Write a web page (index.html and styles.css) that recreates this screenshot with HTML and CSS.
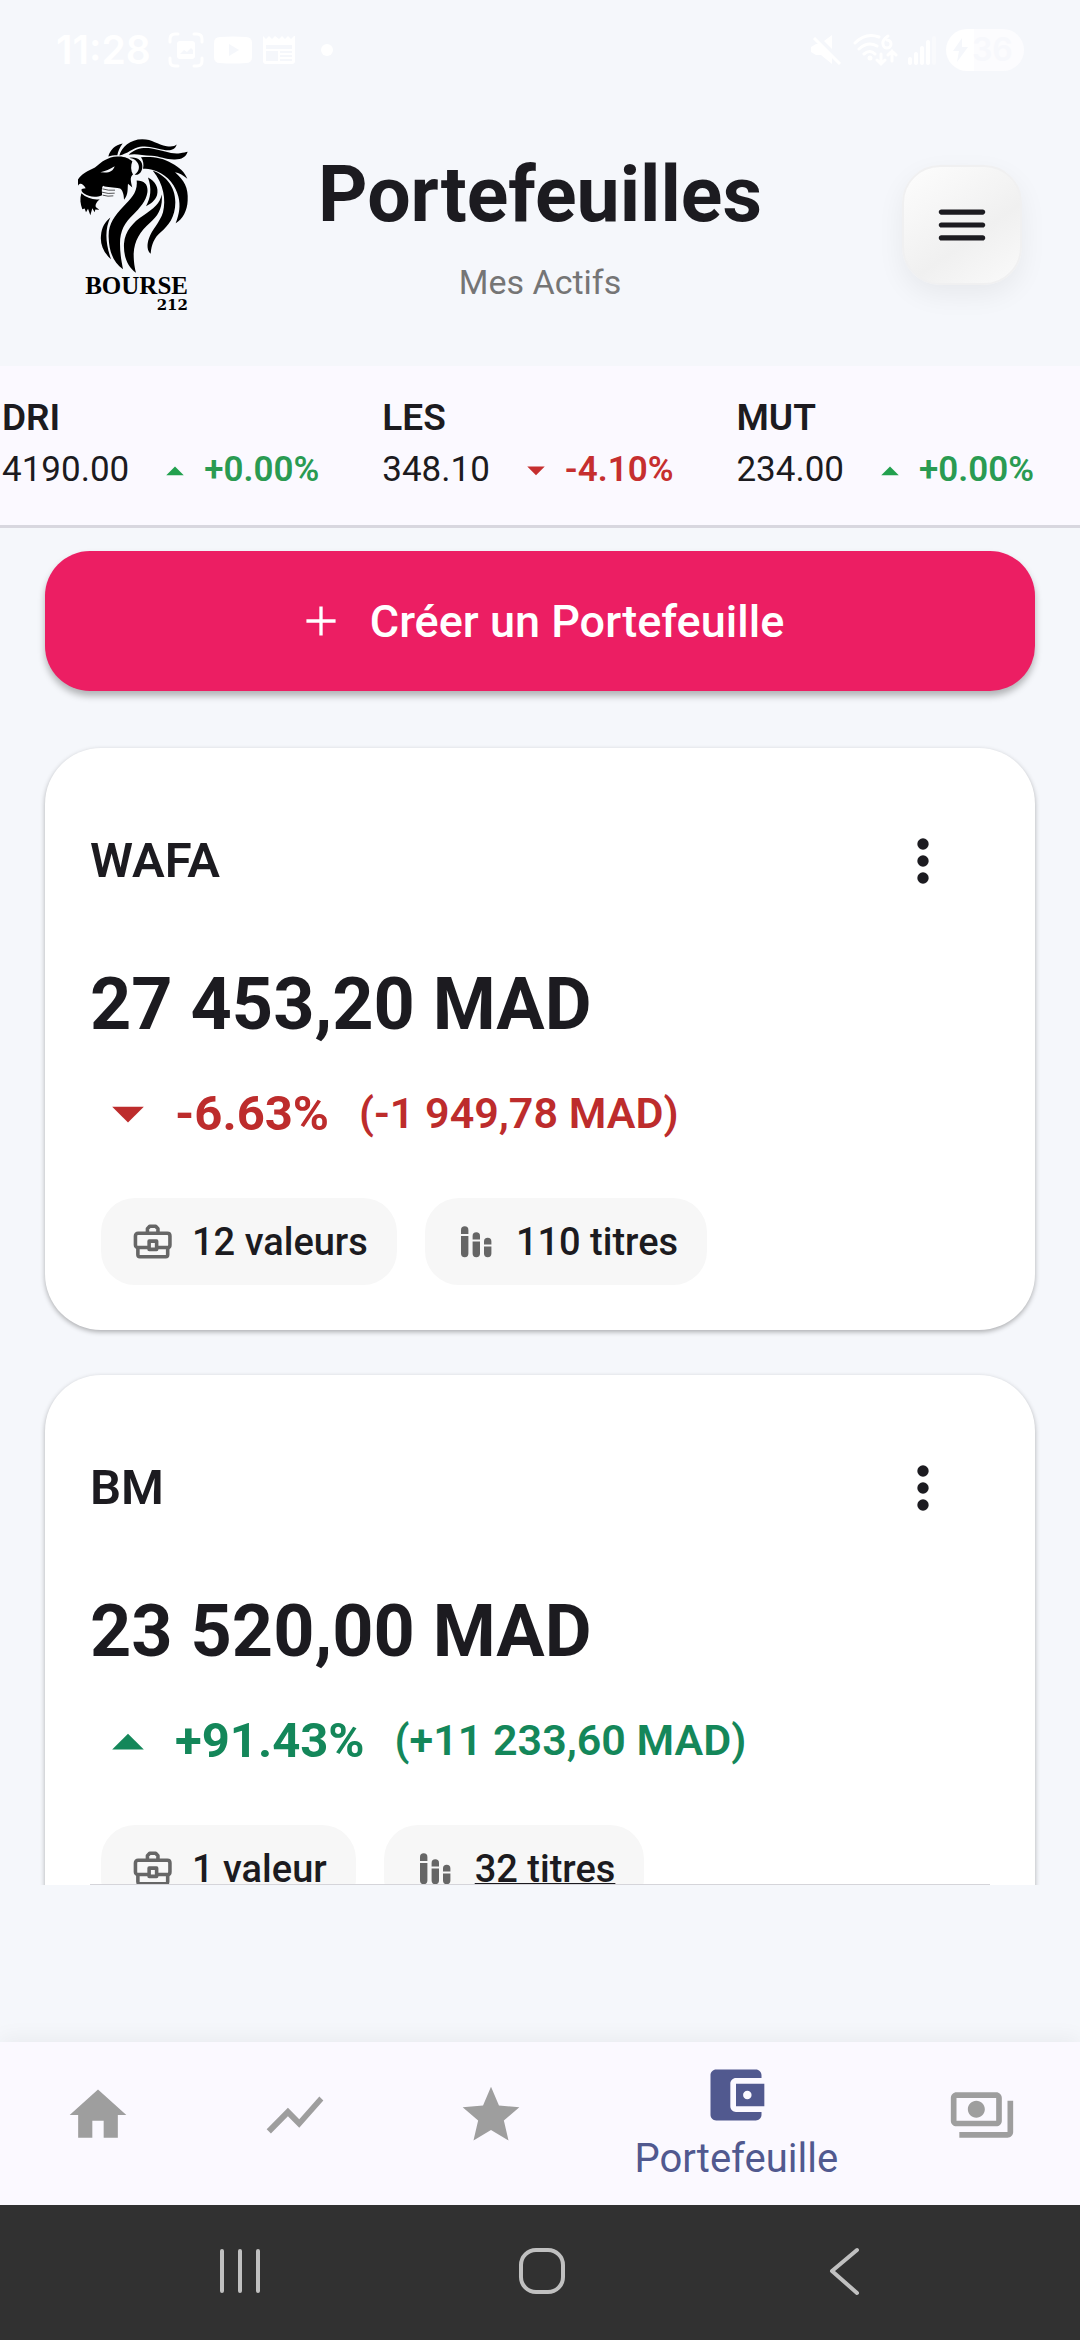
FILE: index.html
```html
<!DOCTYPE html>
<html lang="fr">
<head>
  <meta charset="UTF-8" />
  <meta name="viewport" content="width=device-width, initial-scale=1" />
  <title>Bourse 212 - Portefeuilles</title>
  <link rel="stylesheet" href="styles.css">
</head>
<body>
  <!-- icônes réutilisées -->
  <svg class="sprite" aria-hidden="true">
    <symbol id="up" viewBox="0 0 24 24"><path d="M7 15l5-5 5 5z"/></symbol>
    <symbol id="down" viewBox="0 0 24 24"><path d="M7 10l5 5 5-5z"/></symbol>
    <symbol id="dots" viewBox="0 0 24 24"><circle cx="12" cy="6" r="2"/><circle cx="12" cy="12" r="2"/><circle cx="12" cy="18" r="2"/></symbol>
    <symbol id="case" viewBox="0 0 24 24">
      <g fill="none" stroke="currentColor" stroke-width="1.9" stroke-linejoin="round">
        <path d="M9.3 7.5V5.2L10.5 3.9h3.2l1.2 1.3v2.3"/>
        <path d="M9.8 15.2H4.3c-.8 0-1.4-.6-1.4-1.4V9c0-.8.6-1.4 1.4-1.4h15.6c.8 0 1.4.6 1.4 1.4v4.8c0 .8-.6 1.4-1.4 1.4h-5.3"/>
        <path d="M4.2 15.2v3.9c0 .6.4 1 1 1h13.9c.6 0 1-.4 1-1v-3.9"/>
        <path d="M10.2 11.8h4v4.4h-4z"/>
      </g>
    </symbol>
    <symbol id="bars" viewBox="0 0 45 45">
      <path d="M7 15v-4a3.7 3.7 0 0 1 7.4 0v4zM7 17h7.4v17.500a3.700 3.700 0 0 1-7.400 0zM18.600 20.500v-3.500a3.700 3.700 0 0 1 7.400 0v3.500zM18.600 22.500h7.400v12a3.700 3.700 0 0 1-7.400 0zM30 25.500v-3a3.700 3.700 0 0 1 7.400 0v3zM30 27.500h7.400v7a3.700 3.700 0 0 1-7.400 0z"/>
    </symbol>
  </svg>

  <div class="status">
    <div class="status-left">
      <span class="clock">11:28</span>
      <svg width="36" height="36" viewBox="0 0 36 36"><g fill="none" stroke="#fff" stroke-width="3" stroke-linecap="round"><path d="M2 10V7q0-5 5-5h3M26 2h3q5 0 5 5v3M34 26v3q0 5-5 5h-3M10 34H7q-5 0-5-5v-3"/></g><path fill="#fff" fill-rule="evenodd" d="M12 9h12q3 0 3 3v12q0 3-3 3H12q-3 0-3-3V12q0-3 3-3zM12 22h13v-4l-2-2-4 4-3-2z"/></svg>
      <svg width="40" height="36" viewBox="0 0 40 36"><path fill="#fff" fill-rule="evenodd" d="M7 5q13-1 26 0 6 0 6 6v14q0 6-6 6-13 1-26 0-6 0-6-6V11q0-6 6-6zM16 12v12l10-6z"/></svg>
      <svg width="34" height="36" viewBox="0 0 34 36"><path fill="#fff" fill-rule="evenodd" d="M1 4l3 3 3-3 3 3 3-3 4 3 3-3 3 3 3-3 3 3 3-3h1v25q0 3-3 3H4q-3 0-3-3zM4 13v4h26v-4zM4 19v10h12V19zM18 19v2h12v-2zM18 23v2h12v-2zM18 27v2h12v-2z"/></svg>
      <svg class="dot" width="12" height="12" viewBox="0 0 12 12"><circle cx="6" cy="6" r="6" fill="#fff"/></svg>
    </div>
    <div class="status-right">
      <svg width="32" height="32" viewBox="0 0 32 32"><path fill="#fff" d="M1 13l5-3h3l13 13v7L11 21H6l-5-3zM14 7l8-6v14z"/><path stroke="#fff" stroke-width="3" d="M4 4l26 26"/></svg>
      <svg width="46" height="34" viewBox="0 0 46 34"><g fill="none" stroke="#fff" stroke-width="3" stroke-linecap="round"><path d="M3 10Q14-1 27 4M7 16q9-8 18-3M12 21q6-5 11 0"/><path d="M36 3q-6 4-5 8a4 4 0 1 0 4-4M29 21v10M25 27l4 4 4-4M40 28V18M36 22l4-4 4 4"/></g><circle cx="18" cy="25" r="2.500" fill="#fff"/></svg>
      <svg width="28" height="32" viewBox="0 0 28 32"><g stroke="#fff" stroke-width="4" stroke-linecap="round"><path d="M2 25v4M8 20v9M14 14v15M20 8v21"/><path opacity=".4" d="M26 4v25"/></g></svg>
      <span class="battery"><svg width="18" height="24" viewBox="0 0 18 24"><path fill="#f5f7fb" d="M10 0L1 13h6l-2 11L16 9h-6z"/></svg>36</span>
    </div>
  </div>

  <header class="header">
    <div class="logo">
      <svg class="lion" viewBox="45 50 345 410" aria-hidden="true">
        <path d="M145 108C150 88 165 74 188 69C180 80 174 92 172 104C162 104 152 105 145 108z"/>
        <path d="M178 105C185 80 210 56 247 56C277 56 292 72 320 77C335 79 345 77 350 72C346 87 332 91 318 89C290 84 265 74 240 79C217 84 203 100 178 105z"/>
        <path d="M206 103C225 84 250 80 275 84C310 90 335 102 360 98C370 97 378 95 383 94C378 110 365 117 345 117C320 118 300 108 275 106C245 104 225 98 206 103z"/>
        <path d="M243 110C275 107 310 112 335 128C358 140 375 155 382 175C368 163 357 157 345 155C372 178 386 202 383 240C382 270 368 297 347 308C358 280 362 255 355 228C348 198 325 165 290 152C275 146 262 143 249 145C252 132 250 120 243 110z"/>
        <path d="M278 150C315 165 346 195 346 245C346 290 325 315 302 335C284 350 274 370 272 400C261 390 260 372 267 353C275 328 300 305 309 275C318 240 312 190 278 150z"/>
        <path d="M264 171C286 182 297 202 291 224C285 240 272 250 258 257C272 232 276 205 264 171z"/>
        <path d="M230 180C256 180 265 195 262 217C258 242 240 262 220 282C195 305 180 330 180 370C180 400 185 425 189 446C162 428 147 395 146 350C144 310 165 285 188 260C213 235 234 215 230 180z"/>
        <path d="M305 222C309 262 295 285 270 307C241 332 223 360 221 400C221 425 224 440 228 457C204 440 190 410 192 370C195 330 220 305 250 285C280 265 301 248 305 222z"/>
        <path d="M151 291C135 325 135 365 153 416C130 396 120 370 123 345C125 320 135 305 151 291z"/>
        <path d="M54 177C62 162 85 150 105 141C125 124 143 109 172 108C195 107 206 114 217 122C212 135 212 150 219 162C209 170 212 182 217 201L204 190C202 206 206 222 192 238C192 220 186 206 180 204C160 200 142 202 129 196C123 205 127 214 126 224C105 233 84 227 72 219C64 213 62 206 68 205L77 203C69 190 60 185 54 196z"/>
        <path d="M208 112C230 107 249 120 247 140C246 155 235 166 224 162C236 155 240 140 234 129C228 118 220 115 208 112z"/>
        <path d="M64 218C80 232 100 239 119 236C108 245 105 255 108 260L118 268L106 267L104 275L97 263L91 284L84 265L78 275L74 264L67 266C61 250 59 235 64 218z"/>
        <path class="eye" d="M121 155C136 151 150 146 164 137C160 150 150 156 135 156z"/>
        <path class="whisker" d="M127 205q18 6 38 4M126 215q18 6 38 3M128 224q16 5 32 2"/>
      </svg>
      <span class="logo-name">BOURSE</span>
      <span class="logo-num">212</span>
    </div>
    <div class="titles">
      <h1>Portefeuilles</h1>
      <p>Mes Actifs</p>
    </div>
    <button class="menu-btn" aria-label="Menu">
      <svg width="62" height="62" viewBox="0 0 24 24"><path d="M4 18h16c.55 0 1-.45 1-1s-.45-1-1-1H4c-.55 0-1 .45-1 1s.45 1 1 1zm0-5h16c.55 0 1-.45 1-1s-.45-1-1-1H4c-.55 0-1 .45-1 1s.45 1 1 1zM3 7c0 .55.45 1 1 1h16c.55 0 1-.45 1-1s-.45-1-1-1H4c-.55 0-1 .45-1 1z"/></svg>
    </button>
  </header>

  <section class="ticker">
    <div class="quote">
      <b>DRI</b>
      <div class="quote-row"><span>4190.00</span><svg><use href="#up"/></svg><span class="pct up">+0.00%</span></div>
    </div>
    <div class="quote">
      <b>LES</b>
      <div class="quote-row"><span>348.10</span><svg class="down"><use href="#down"/></svg><span class="pct down">-4.10%</span></div>
    </div>
    <div class="quote">
      <b>MUT</b>
      <div class="quote-row"><span>234.00</span><svg><use href="#up"/></svg><span class="pct up">+0.00%</span></div>
    </div>
  </section>

  <main class="list">
    <button class="create-btn">
      <svg width="50" height="50" viewBox="0 0 24 24"><path d="M19 12.800h-6.200V19h-1.600v-6.200H5v-1.600h6.200V5h1.600v6.200H19z"/></svg>
      Créer un Portefeuille
    </button>

    <article class="card">
      <div class="card-head">
        <h2>WAFA</h2>
        <button class="more" aria-label="Options WAFA"><svg><use href="#dots"/></svg></button>
      </div>
      <div class="amount">27 453,20 MAD</div>
      <div class="change loss">
        <svg><use href="#down"/></svg>
        <strong>-6.63%</strong>
        <span>(-1 949,78 MAD)</span>
      </div>
      <div class="chips">
        <div class="chip"><svg><use href="#case"/></svg>12 valeurs</div>
        <div class="chip"><svg><use href="#bars"/></svg>110 titres</div>
      </div>
    </article>

    <article class="card">
      <div class="card-head">
        <h2>BM</h2>
        <button class="more" aria-label="Options BM"><svg><use href="#dots"/></svg></button>
      </div>
      <div class="amount">23 520,00 MAD</div>
      <div class="change gain">
        <svg><use href="#up"/></svg>
        <strong>+91.43%</strong>
        <span>(+11 233,60 MAD)</span>
      </div>
      <div class="chips">
        <div class="chip"><svg><use href="#case"/></svg>1 valeur</div>
        <div class="chip"><svg><use href="#bars"/></svg><span class="marked">32 titres</span></div>
      </div>
    </article>
  </main>

  <nav class="tabs">
    <a href="#" aria-label="Accueil"><svg viewBox="0 0 24 24"><path d="M10 20v-6h4v6h5v-8h3L12 3 2 12h3v8z"/></svg></a>
    <a href="#" aria-label="Marché"><svg viewBox="0 0 24 24"><path d="M3.500 18.490l6-6.010 4 4L22 6.920l-1.410-1.410-7.090 7.970-4-4L2 16.990z"/></svg></a>
    <a href="#" aria-label="Favoris"><svg viewBox="0 0 24 24"><path d="M12 17.270L18.180 21l-1.640-7.030L22 9.240l-7.190-.61L12 2 9.190 8.630 2 9.240l5.460 4.730L5.820 21z"/></svg></a>
    <a href="#" class="active"><svg viewBox="0 0 24 24"><path d="M21 18v1c0 1.100-.9 2-2 2H5c-1.110 0-2-.9-2-2V5c0-1.100.89-2 2-2h14c1.100 0 2 .9 2 2v1h-9c-1.110 0-2 .9-2 2v8c0 1.100.89 2 2 2h9zm-9-2h10V8H12v8zm4-2.500c-.83 0-1.500-.67-1.500-1.500s.67-1.500 1.500-1.500 1.500.67 1.500 1.500-.67 1.500-1.500 1.500z"/></svg>Portefeuille</a>
    <a href="#" aria-label="Dividendes"><svg viewBox="0 0 24 24"><path d="M19 14V6c0-1.100-.9-2-2-2H3c-1.100 0-2 .9-2 2v8c0 1.100.9 2 2 2h14c1.100 0 2-.9 2-2zm-2 0H3V6h14v8zm-7-7c-1.660 0-3 1.340-3 3s1.340 3 3 3 3-1.340 3-3-1.340-3-3-3zm13 0v11c0 1.100-.9 2-2 2H4v-2h17V7h2z"/></svg></a>
  </nav>

  <div class="sysnav">
    <button aria-label="Applications récentes"><svg width="50" height="50" viewBox="0 0 50 50"><path d="M7 5v40M25 5v40M43 5v40"/></svg></button>
    <button aria-label="Écran d'accueil"><svg width="50" height="50" viewBox="0 0 50 50"><rect x="4" y="4" width="42" height="42" rx="15"/></svg></button>
    <button aria-label="Retour"><svg width="50" height="50" viewBox="0 0 50 50"><path d="M38 4L13 25l25 22"/></svg></button>
  </div>
</body>
</html>
```
FILE: styles.css
```css
* {
  box-sizing: border-box;
}
body {
  margin: 0;
  height: 100vh;
  display: flex;
  flex-direction: column;
  overflow: hidden;
  background-color: #f5f7fb;
  color: #1c1b20;
  font-family: Roboto, sans-serif;
}
h1, h2, p {
  margin: 0;
}
button {
  border: none;
  padding: 0;
  background: none;
  color: inherit;
  font-family: inherit;
  cursor: pointer;
}
svg {
  display: block;
  flex: none;
  fill: currentColor;
}
.sprite {
  position: absolute;
  width: 0;
  height: 0;
}

/* barre d'état */
.status {
  height: 100px;
  flex: none;
  display: flex;
  align-items: center;
  justify-content: space-between;
  padding: 0 56px;
  color: #fff;
}
.status-left,
.status-right {
  display: flex;
  align-items: center;
  gap: 9px;
}
.clock {
  font: 600 39px/44px Inter, sans-serif;
  margin-right: 8px;
}
.dot {
  margin-left: 16px;
}
.status-right {
  gap: 10px;
}
.battery {
  display: flex;
  align-items: center;
  gap: 2px;
  width: 78px;
  height: 42px;
  padding-left: 6px;
  border-radius: 21px;
  background: linear-gradient(90deg, #fff 28px, #fcfcfe 28px);
  color: #f7f8fc;
  font: 600 32px/42px Inter, sans-serif;
}

/* en-tête */
.header {
  flex: none;
  height: 266px;
  display: grid;
  grid-template-columns: 1fr auto 1fr;
  align-items: center;
  padding: 0 58px 17px;
}
.logo {
  display: flex;
  flex-direction: column;
  align-items: flex-end;
  width: 115px;
  margin-left: 17px;
  color: #000;
  font-family: "DejaVu Serif", serif;
  font-weight: bold;
}
.lion {
  width: 115px;
  height: 137px;
}
.eye {
  fill: #f5f7fb;
}
.whisker {
  fill: none;
  stroke: #000;
  stroke-width: 2;
}
.logo-name {
  padding-right: 2px;
  font-family: "Liberation Serif", serif;
  font-size: 25px;
  line-height: 24px;
}
.logo-num {
  padding-right: 2px;
  font-size: 15px;
  line-height: 14px;
}
.titles {
  text-align: center;
}
h1 {
  font-size: 77px;
  font-weight: 700;
  line-height: 94px;
}
.titles p {
  margin-top: 20px;
  font-size: 34px;
  line-height: 40px;
  color: #757575;
}
.menu-btn {
  justify-self: end;
  width: 120px;
  height: 120px;
  display: flex;
  align-items: center;
  justify-content: center;
  border: 2px solid #f0f0f1;
  border-radius: 38px;
  background: linear-gradient(145deg, #fdfdfd, #f0f0f0 60%, #fafafa);
  box-shadow: 0 10px 28px rgba(0, 0, 0, 0.06);
}

/* bandeau des cours */
.ticker {
  flex: none;
  display: flex;
  gap: 63px;
  height: 162px;
  padding: 29px 0 0 2px;
  border-bottom: 3px solid #d8d7df;
  background-color: #fbf9ff;
  white-space: nowrap;
}
.quote b {
  display: block;
  font-size: 37px;
  font-weight: 600;
  line-height: 46px;
}
.quote-row {
  display: flex;
  align-items: center;
  font-size: 35px;
  line-height: 58px;
}
.quote-row svg {
  width: 42px;
  height: 42px;
  margin: 0 8px 0 25px;
  color: #22a04e;
}
.pct {
  font-weight: 600;
}
.up {
  color: #2a9b52;
}
.pct.down,
.quote-row svg.down {
  color: #c62f2f;
}

/* liste */
.list {
  position: relative;
  flex: 1;
  min-height: 0;
  overflow: hidden;
  padding: 23px 45px 0;
  margin-bottom: 157px;
}
.list::after {
  content: "";
  position: absolute;
  left: 90px;
  right: 90px;
  bottom: 0;
  height: 1px;
  background-color: #d5d5da;
}
.create-btn {
  width: 100%;
  height: 140px;
  display: flex;
  align-items: center;
  justify-content: center;
  gap: 24px;
  border-radius: 45px;
  background-color: #ec1e63;
  color: #fff;
  font-size: 45px;
  font-weight: 500;
  box-shadow: 0 5px 7px rgba(0, 0, 0, 0.28);
}
.card {
  margin-top: 45px;
  height: 582px;
  padding: 45px;
  border-radius: 56px;
  background-color: #fff;
  box-shadow: 0 2px 5px rgba(0, 0, 0, 0.3);
}
.create-btn + .card {
  margin-top: 57px;
}
.card-head {
  display: flex;
  align-items: center;
  justify-content: space-between;
}
h2 {
  font-size: 49px;
  font-weight: 600;
}
.more {
  width: 135px;
  height: 135px;
  display: flex;
  align-items: center;
  justify-content: center;
}
.more svg {
  width: 68px;
  height: 68px;
}
.amount {
  margin-top: 33px;
  font-size: 72px;
  font-weight: 700;
  line-height: 88px;
}
.change {
  display: flex;
  align-items: center;
  height: 76px;
  margin-top: 26px;
  white-space: nowrap;
}
.change svg {
  width: 76px;
  height: 76px;
}
.change strong {
  margin: 0 30px 0 9px;
  font-size: 49px;
}
.change span {
  font-size: 43px;
  font-weight: 600;
}
.loss {
  color: #bd2c2c;
}
.gain {
  color: #14875a;
}
.chips {
  display: flex;
  gap: 28px;
  margin: 47px 0 0 11px;
}
.chip {
  display: flex;
  align-items: center;
  gap: 17px;
  height: 87px;
  padding: 0 29px;
  border-radius: 34px;
  background-color: #f7f7f7;
  font-size: 38px;
  font-weight: 500;
  white-space: nowrap;
}
.chip svg {
  width: 45px;
  height: 45px;
  color: #666;
}
.marked {
  text-decoration: underline;
  text-decoration-thickness: 2px;
  text-underline-offset: 1px;
}

/* onglets */
.tabs {
  flex: none;
  height: 163px;
  display: flex;
  background-color: #fbf9ff;
  box-shadow: 0 -4px 20px rgba(0, 0, 0, 0.05);
}
.tabs a {
  flex: 2;
  display: flex;
  flex-direction: column;
  align-items: center;
  padding-top: 39px;
  color: #9e9e9e;
  font-size: 40px;
  line-height: 46px;
  text-decoration: none;
}
.tabs svg {
  width: 68px;
  height: 68px;
}
.tabs .active {
  flex: 3;
  padding-top: 19px;
  gap: 7px;
  color: #51598f;
}

/* navigation système */
.sysnav {
  flex: none;
  height: 135px;
  display: flex;
  justify-content: center;
  gap: 252px;
  padding: 0 0 4px 4px;
  background-color: #313131;
  color: #c0c0c0;
}
.sysnav svg {
  fill: none;
  stroke: currentColor;
  stroke-width: 4;
  stroke-linecap: round;
  stroke-linejoin: round;
}
```
